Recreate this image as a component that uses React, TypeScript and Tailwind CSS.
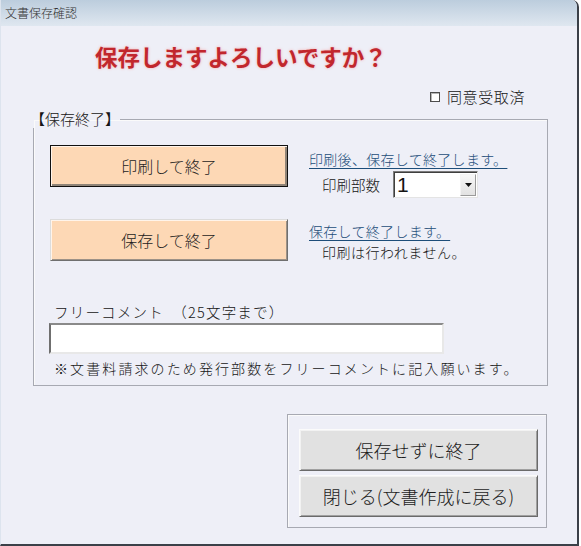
import type { ReactNode } from "react";

const PeachButton = ({ children, focused }: { children: ReactNode; focused?: boolean }) => (
    <button
        className={
            focused
                ? "w-[238px] h-[42px] shrink-0 flex items-center justify-center bg-[#fdd8b5] border border-[#101010] shadow-[inset_1px_1px_0_#fff4ea,inset_-2px_-2px_0_#8f8478] text-[16px] leading-none text-[#1c1c1c]"
                : "w-[238px] h-[42px] shrink-0 flex items-center justify-center bg-[#fdd8b5] border border-t-[#dcdcdc] border-l-[#dcdcdc] border-r-[#6f6f6f] border-b-[#6f6f6f] shadow-[inset_1px_1px_0_#fff4ea,inset_-1px_-1px_0_#9d9287] text-[16px] leading-none text-[#1c1c1c]"
        }
    >
        {children}
    </button>
);

const GrayButton = ({ children }: { children: ReactNode }) => (
    <button className="w-[239px] h-[42px] flex items-center justify-center bg-[#e1e1e1] border border-t-[#fbfbfb] border-l-[#fbfbfb] border-r-[#6a6a6a] border-b-[#6a6a6a] shadow-[inset_1px_1px_0_#f2f2f2,inset_-1px_-1px_0_#a0a0a0] text-[18px] leading-none text-[#1c1c1c]">
        {children}
    </button>
);

export default function App() {
    return (
        <div className="w-[581px] h-[546px] bg-white font-['Noto_Sans_CJK_JP',sans-serif] font-light text-[#151515]">
            <div className="w-[579px] h-[546px] flex flex-col bg-[#eeeff7] border-l border-l-[#dde4ee] border-r-2 border-b-2 border-r-[#3b4048] border-b-[#3b4048] rounded-tr-[7px] overflow-hidden">
                {/* title bar */}
                <div className="h-[26px] shrink-0 flex items-center pl-[4px] bg-linear-to-b from-[#bccddd] to-[#dfe7f0] text-[12px] leading-none text-[#333]">
                    文書保存確認
                </div>

                <h1 className="mt-[16px] pl-[94px] text-[22.5px] leading-[28px] font-bold text-[#c1272d] [text-shadow:0_0_3px_#f6a9a9]">
                    保存しますよろしいですか？
                </h1>

                <div className="mt-[18px] flex items-center justify-end pr-[52px] h-[18px]">
                    <span className="w-[10px] h-[10px] border border-[#4d4d4d] bg-white shadow-[inset_1px_1px_0_#b5b5b5]"></span>
                    <span className="ml-[7px] text-[15px] leading-[18px] tracking-[0.6px]">同意受取済</span>
                </div>

                {/* 保存終了 group */}
                <fieldset className="mt-[4px] ml-[32px] w-[515px] border border-[#a7a9b2] shadow-[inset_1px_1px_0_#fafafa] px-0 pb-[8px]">
                    <legend className="text-[15px] leading-[18px] font-light px-0 -ml-[4px]">【保存終了】</legend>

                    <div className="pl-[16px] pt-[17px]">
                        <div className="flex items-start">
                            <PeachButton focused>印刷して終了</PeachButton>
                            <div className="ml-[21px] pt-[6px] flex flex-col">
                                <span className="text-[14px] leading-[17px] tracking-[0.3px] text-[#1d4d79] underline underline-offset-[3px]">
                                    印刷後、保存して終了します。
                                </span>
                                <div className="mt-[3px] ml-[13px] flex items-center">
                                    <span className="text-[14.5px] leading-[18px]">印刷部数</span>
                                    <div className="ml-[13px] w-[85px] h-[27px] bg-white border border-t-[#7c7c7c] border-l-[#7c7c7c] border-r-[#e4e4e4] border-b-[#e4e4e4] shadow-[inset_1px_1px_0_#3f3f3f] flex items-center pl-[3px]">
                                        <span className="flex-1 font-['Liberation_Sans',sans-serif] font-normal text-[21px] leading-none">1</span>
                                        <div className="w-[16px] h-[22px] mr-[1px] bg-linear-to-b from-[#f7f7f7] to-[#e2e2e2] border border-t-[#f4f4f4] border-l-[#f4f4f4] border-r-[#9a9a9a] border-b-[#9a9a9a] flex items-center justify-center">
                                            <svg width="7" height="4" viewBox="0 0 7 4">
                                                <path d="M0 0h7L3.5 4z" fill="#111" />
                                            </svg>
                                        </div>
                                    </div>
                                </div>
                            </div>
                        </div>

                        <div className="mt-[21px] flex items-start">
                            <PeachButton>保存して終了</PeachButton>
                            <div className="ml-[21px] pt-[4px] flex flex-col">
                                <span className="text-[14px] leading-[17px] tracking-[0.3px] text-[#1d4d79] underline underline-offset-[3px]">
                                    保存して終了します。
                                </span>
                                <span className="mt-[4px] ml-[13px] text-[14px] leading-[17px] tracking-[0.5px]">印刷は行われません。</span>
                            </div>
                        </div>

                        <div className="mt-[42px] pl-[4px] text-[14.5px] leading-[18px] tracking-[1.2px]">フリーコメント　（25文字まで）</div>
                        <input
                            type="text"
                            className="mt-[2px] -ml-px block w-[395px] h-[31px] bg-white border-2 border-t-[#8a8a8a] border-l-[#6f6f6f] border-r-[#e8e8e8] border-b-[#e8e8e8] outline-none"
                        />
                        <div className="mt-[5px] pl-[4px] text-[14px] leading-[18px] tracking-[2.1px]">
                            ※文書料請求のため発行部数をフリーコメントに記入願います。
                        </div>
                    </div>
                </fieldset>

                {/* bottom buttons */}
                <div className="mt-[28px] ml-[286px] w-[260px] border border-[#a7a9b2] shadow-[inset_1px_1px_0_#fafafa] pt-[14px] pl-[11px] pb-[10px] flex flex-col gap-[4px]">
                    <GrayButton>保存せずに終了</GrayButton>
                    <GrayButton>閉じる(文書作成に戻る)</GrayButton>
                </div>
            </div>
        </div>
    );
}
